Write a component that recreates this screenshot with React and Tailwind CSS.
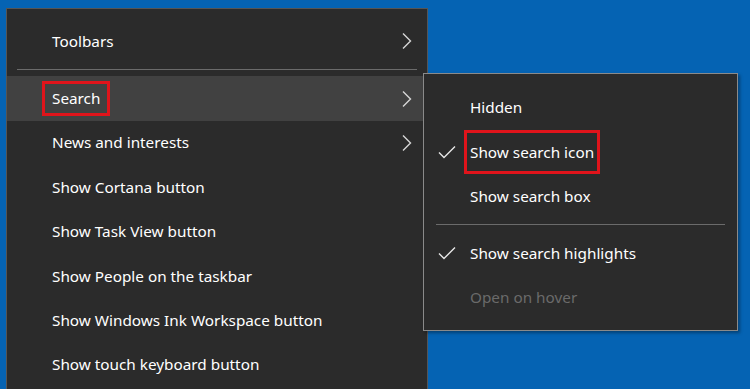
import React from 'react';

const mainItems = [
  { label: 'Search', arrow: true, active: true, boxed: true },
  { label: 'News and interests', arrow: true },
  { label: 'Show Cortana button' },
  { label: 'Show Task View button' },
  { label: 'Show People on the taskbar' },
  { label: 'Show Windows Ink Workspace button' },
  { label: 'Show touch keyboard button' },
];

const Chevron = () => (
  <svg width="12" height="18" viewBox="0 0 12 18" fill="none" stroke="#d6d6d6" strokeWidth="1.4">
    <path d="M2 1.5 L9.5 9 L2 16.5" />
  </svg>
);

const Check = () => (
  <svg width="18" height="14" viewBox="0 0 18 14" fill="none" stroke="#e6e6e6" strokeWidth="1.4">
    <path d="M1 7.5 L6 12.5 L17 1.5" />
  </svg>
);

const MenuRow = ({ label, arrow, active, boxed }) => (
  <div className={`relative flex h-[44.4px] items-center pl-[37px] pr-[14px] ${active ? 'bg-[#414141]' : ''}`}>
    <span className={`px-[8px] leading-[31px] ${boxed ? 'outline-[3px] outline-[#e0141b] outline -outline-offset-[1px]' : ''}`}>
      {label}
    </span>
    {arrow && (
      <span className="ml-auto flex items-center">
        <Chevron />
      </span>
    )}
  </div>
);

const SubRow = ({ label, checked, boxed, disabled }) => (
  <div className="flex h-[44.5px] items-center">
    <span className="flex w-[45px] justify-end pr-[13px]">{checked && <Check />}</span>
    <span
      className={`px-[1px] leading-[34px] ${disabled ? 'text-[#6a6a6a]' : 'text-white'} ${
        boxed ? 'outline-[3px] outline-[#e0141b] outline outline-offset-[2px]' : ''
      }`}
    >
      {label}
    </span>
  </div>
);

export default function App() {
  return (
    <div
      className="relative h-[389px] w-[750px] overflow-hidden bg-[#0563b3] pl-[6px] pt-[8px] text-[15.3px] text-white"
      style={{ fontFamily: '"Noto Sans", "Open Sans", sans-serif' }}
    >
      {/* Main taskbar menu */}
      <div className="w-[422px] border border-[#555555] bg-[#2b2b2b] pt-[10px] pb-[12px]">
        <MenuRow label="Toolbars" arrow />
        <div className="mx-[10px] mt-[6px] mb-[6px] h-px bg-[#6b6b6b]" />
        {mainItems.map((item) => (
          <MenuRow key={item.label} {...item} />
        ))}
      </div>

      {/* Search flyout */}
      <div className="absolute left-[423px] top-[73px] w-[315px] border border-[#8a8a8a] bg-[#2b2b2b] pt-[11px] pb-[10px] shadow-[2px_2px_3px_rgba(0,0,0,0.35)]">
        <SubRow label="Hidden" />
        <SubRow label="Show search icon" checked boxed />
        <SubRow label="Show search box" />
        <div className="mx-[12px] mt-[5px] mb-[6px] h-px bg-[#6b6b6b]" />
        <SubRow label="Show search highlights" checked />
        <SubRow label="Open on hover" disabled />
      </div>
    </div>
  );
}
